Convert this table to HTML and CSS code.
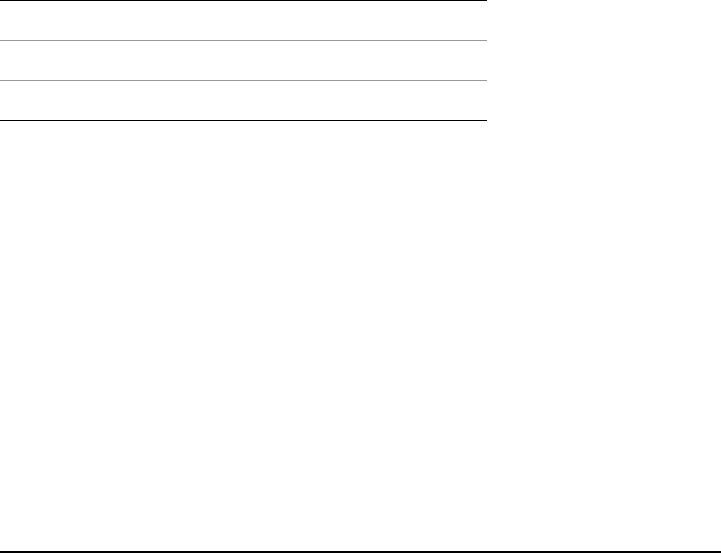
FILE: index.html
```html
<!DOCTYPE html>
<html lang="en">

<head>
    <title>Table</title>
    <meta charset="UTF-8">
    <link rel="stylesheet" href="styles.css">
</head>

<body>
<div class="page">
    <!-- 빈 표 -->
    <div class="table">
        <div class="row"></div>
        <div class="row"></div>
        <div class="row"></div>
    </div>

    <!-- 하단 -->
    <div class="footer"></div>
</div>
</body>

</html>
```

FILE: styles.css
```css
/* 전체 배경 */
body {
    margin: 0;
    padding: 0;
    background-color: #ffffff;
    font-family: 'Liberation Sans', sans-serif;
}

.page {
    display: flex;
    flex-direction: column;
    height: 100vh;
}

/* 표 */
.table {
    width: 487px;
    border-top: 1px solid #000000;
}

.row {
    height: 39px;
    border-bottom: 1px solid #999999;
}

.row:last-child {
    border-bottom-color: #000000;
}

/* 하단 선 */
.footer {
    margin-top: auto;
    margin-bottom: 0;
    height: 0;
    border-top: 2px solid #000000;
}
```
